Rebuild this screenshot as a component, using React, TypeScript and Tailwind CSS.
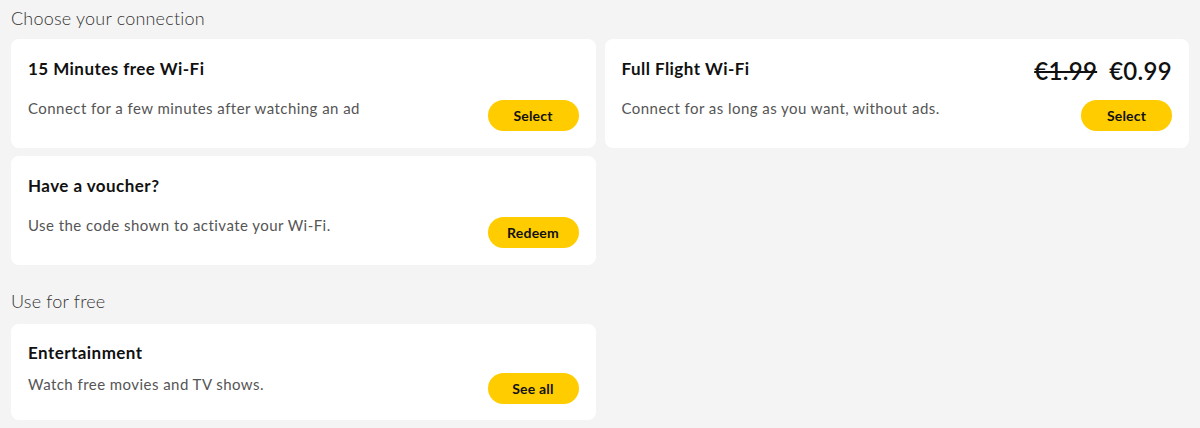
function PillButton({ label }: { label: string }) {
  return (
    <button className="h-[31px] w-[91px] shrink-0 rounded-full bg-[#ffcc00] text-[14px] font-bold tracking-[0.2px] text-[#111]">
      {label}
    </button>
  );
}

type CardProps = {
  title: string;
  text: string;
  action: string;
  price?: { was: string; now: string };
};

function OptionCard({ title, text, action, price }: CardProps) {
  return (
    <div className="rounded-[8px] bg-white px-[17px] pb-[17px] pt-[17px]">
      <div className="flex h-[26px] items-center justify-between">
        <h3 className="text-[17px] font-bold leading-[26px] tracking-[0.45px] text-[#111]">{title}</h3>
        {price && (
          <div className="flex items-center gap-[12px] pt-[4px] text-[24px] font-semibold leading-[26px] tracking-[0.3px] text-[#111]">
            <span className="line-through decoration-[2px]">{price.was}</span>
            <span>{price.now}</span>
          </div>
        )}
      </div>
      <div className="mt-[18px] flex items-start justify-between">
        <p className="-mt-[3px] text-[15px] leading-[22px] tracking-[0.45px] text-[#555]">{text}</p>
        <PillButton label={action} />
      </div>
    </div>
  );
}

export default function App() {
  return (
    <div
      className="min-h-[428px] bg-[#f4f4f4] px-[11px] pb-[9px]"
      style={{ fontFamily: "Lato, 'Noto Sans', sans-serif" }}
    >
      <h2 className="pt-[6px] pb-[8px] text-[18px] font-light leading-[25px] tracking-[0.2px] text-[#333]">
        Choose your connection
      </h2>
      <div className="grid grid-cols-2 gap-x-[9px] gap-y-[8px]">
        <OptionCard
          title="15 Minutes free Wi-Fi"
          text="Connect for a few minutes after watching an ad"
          action="Select"
        />
        <OptionCard
          title="Full Flight Wi-Fi"
          text="Connect for as long as you want, without ads."
          action="Select"
          price={{ was: "€1.99", now: "€0.99" }}
        />
        <OptionCard
          title="Have a voucher?"
          text="Use the code shown to activate your Wi-Fi."
          action="Redeem"
        />
      </div>
      <h2 className="pt-[24px] pb-[10px] text-[18px] font-light leading-[25px] tracking-[0.2px] text-[#333]">
        Use for free
      </h2>
      <div className="grid grid-cols-2 gap-x-[9px]">
        <div className="rounded-[8px] bg-white px-[17px] pb-[16px] pt-[16px]">
          <h3 className="text-[17px] font-bold leading-[26px] tracking-[0.45px] text-[#111]">Entertainment</h3>
          <div className="mt-[7px] flex items-start justify-between">
            <p className="text-[15px] leading-[22px] tracking-[0.45px] text-[#555]">
              Watch free movies and TV shows.
            </p>
            <PillButton label="See all" />
          </div>
        </div>
      </div>
    </div>
  );
}
